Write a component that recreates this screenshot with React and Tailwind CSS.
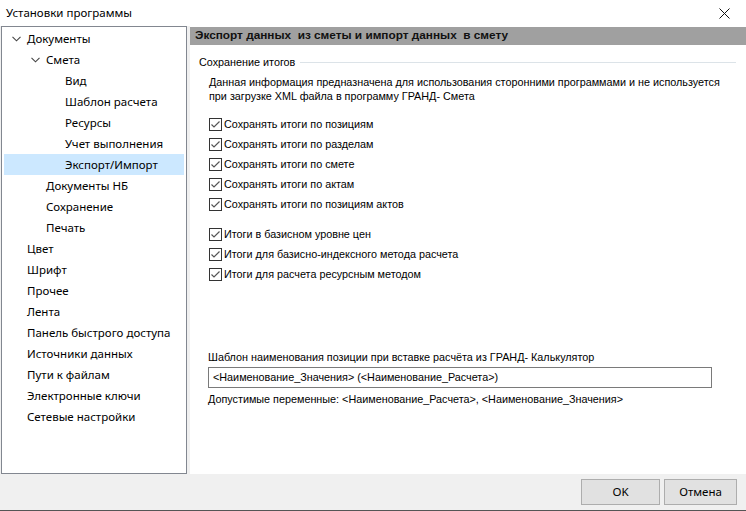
import React from 'react';

const tree = [
    { label: 'Документы', level: 0, open: true },
    { label: 'Смета', level: 1, open: true },
    { label: 'Вид', level: 2 },
    { label: 'Шаблон расчета', level: 2 },
    { label: 'Ресурсы', level: 2 },
    { label: 'Учет выполнения', level: 2 },
    { label: 'Экспорт/Импорт', level: 2, selected: true },
    { label: 'Документы НБ', level: 1 },
    { label: 'Сохранение', level: 1 },
    { label: 'Печать', level: 1 },
    { label: 'Цвет', level: 0 },
    { label: 'Шрифт', level: 0 },
    { label: 'Прочее', level: 0 },
    { label: 'Лента', level: 0 },
    { label: 'Панель быстрого доступа', level: 0 },
    { label: 'Источники данных', level: 0 },
    { label: 'Пути к файлам', level: 0 },
    { label: 'Электронные ключи', level: 0 },
    { label: 'Сетевые настройки', level: 0 },
];

const indent = ['pl-[25px]', 'pl-[44px]', 'pl-[63px]'];
const chevronPos = ['left-[10px]', 'left-[29px]', 'left-[48px]'];

const groupA = [
    'Сохранять итоги по позициям',
    'Сохранять итоги по разделам',
    'Сохранять итоги по смете',
    'Сохранять итоги по актам',
    'Сохранять итоги по позициям актов',
];
const groupB = [
    'Итоги в базисном уровне цен',
    'Итоги для базисно-индексного метода расчета',
    'Итоги для расчета ресурсным методом',
];

const Chevron = ({ className }) => (
    <svg className={className} width="9" height="6" viewBox="0 0 9 6" fill="none">
        <path d="M0.5 0.8 L4.5 4.8 L8.5 0.8" stroke="#444" strokeWidth="1.1" />
    </svg>
);

const Check = ({ label }) => (
    <div className="flex items-center h-[20px]">
        <div className="w-[13px] h-[13px] border border-[#333] bg-white flex items-center justify-center">
            <svg width="11" height="11" viewBox="0 0 11 11" fill="none">
                <path d="M1.5 5.5 L4 8 L9.5 2.5" stroke="#555" strokeWidth="1.2" />
            </svg>
        </div>
        <span className="ml-[2px]">{label}</span>
    </div>
);

const App = () => {
    return (
        <div className="w-[746px] h-[511px] bg-[#f0f0f0] flex flex-col overflow-hidden text-black border-b border-[#555]"
            style={{ fontFamily: '"Noto Sans", sans-serif' }}>
            {/* Title bar */}
            <div className="h-[26px] shrink-0 bg-white flex items-center justify-between pl-[6px] pr-[16px] text-[11.5px]">
                <span>Установки программы</span>
                <svg width="11" height="11" viewBox="0 0 11 11">
                    <path d="M0.5 0.5 L10.5 10.5 M10.5 0.5 L0.5 10.5" stroke="#111" strokeWidth="1" />
                </svg>
            </div>

            <div className="flex flex-1 min-h-0">
                {/* Tree */}
                <div className="ml-[1px] w-[186px] h-[448px] bg-white border border-[#828790] pt-[1px] text-[11.5px]">
                    {tree.map((item) => (
                        <div key={item.label}
                            className={`relative h-[21px] flex items-center ${indent[item.level]} ${item.selected ? 'bg-[#cce8ff] mx-[2px] !pl-[61px]' : ''}`}>
                            {item.open && <Chevron className={`absolute top-[8px] ${chevronPos[item.level]}`} />}
                            <span>{item.label}</span>
                        </div>
                    ))}
                </div>

                {/* Content */}
                <div className="ml-[3px] w-[556px] h-[448px] bg-white flex flex-col text-[10.8px]"
                    style={{ fontFamily: '"Liberation Sans", sans-serif' }}>
                    <div className="h-[18px] mt-[1px] bg-[#a0a0a0] flex items-center pl-[5px] font-bold text-[11.8px] text-[#111]">
                        Экспорт данных&nbsp; из сметы и импорт данных&nbsp; в смету
                    </div>

                    <div className="flex items-center pl-[9px] pr-[10px] mt-[10px] h-[14px]">
                        <span>Сохранение итогов</span>
                        <div className="flex-1 ml-[5px] h-px bg-[#dce3e8]" />
                    </div>

                    <div className="pl-[19px] mt-[6px] leading-[14px]">
                        <div>Данная информация предназначена для использования сторонними программами и не используется</div>
                        <div>при загрузке XML файла в программу ГРАНД- Смета</div>
                    </div>

                    <div className="pl-[19px] mt-[11px]">
                        {groupA.map((t) => <Check key={t} label={t} />)}
                        <div className="h-[10px]" />
                        {groupB.map((t) => <Check key={t} label={t} />)}
                    </div>

                    <div className="pl-[18px] mt-[66px]">
                        <div className="h-[14px] leading-[14px]">Шаблон наименования позиции при вставке расчёта из ГРАНД- Калькулятор</div>
                        <div className="mt-[3px] w-[504px] h-[21px] border border-[#7a7a7a] flex items-center pl-[4px]">
                            &lt;Наименование_Значения&gt; (&lt;Наименование_Расчета&gt;)
                        </div>
                        <div className="mt-[4px] h-[14px] leading-[14px]">Допустимые переменные: &lt;Наименование_Расчета&gt;, &lt;Наименование_Значения&gt;</div>
                    </div>
                </div>
            </div>

            {/* Footer */}
            <div className="h-[36px] shrink-0 flex justify-end items-start pt-[5px] pr-[9px] gap-[4px] text-[11.5px]">
                <button className="w-[79px] h-[26px] bg-[#e1e1e1] border border-[#adadad]">OK</button>
                <button className="w-[73px] h-[26px] bg-[#e1e1e1] border border-[#adadad]">Отмена</button>
            </div>
        </div>
    );
};

export default App;
